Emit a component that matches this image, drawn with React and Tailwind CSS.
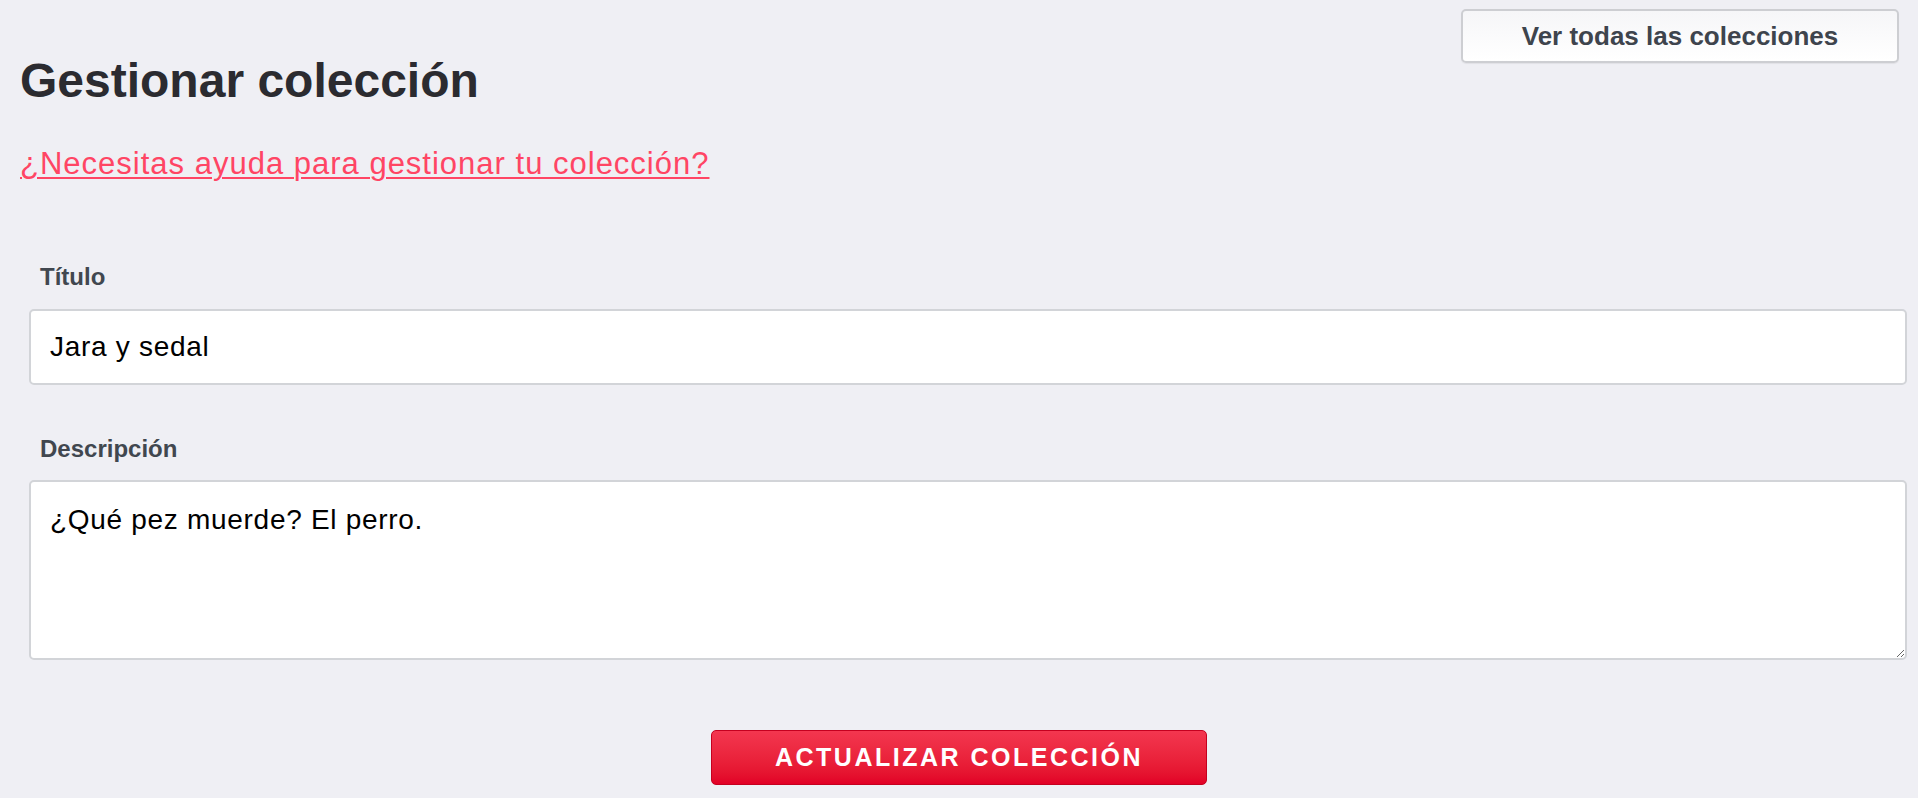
import React, { useState } from "react";

const font = { fontFamily: '"Liberation Sans", Arial, Helvetica, sans-serif' };

function Field({ label, children, className }) {
  return (
    <div className={className}>
      <label className="block pl-[11px] text-[24px] leading-[28px] font-bold text-[#41474f]">
        {label}
      </label>
      {children}
    </div>
  );
}

export default function App() {
  const [title, setTitle] = useState("Jara y sedal");
  const [desc, setDesc] = useState("¿Qué pez muerde? El perro.");

  return (
    <div className="min-h-screen w-full bg-[#efeff4]" style={font}>
      <div className="flex items-start justify-between pl-[20px] pr-[19px]">
        <h1 className="mt-[57px] text-[48px] leading-[48px] font-bold text-[#2b2b30]">
          Gestionar colección
        </h1>
        <button className="mt-[9px] h-[54px] w-[438px] rounded-[5px] border-2 border-[#cdced2] bg-linear-to-b from-[#f6f6f8] to-white text-[26px] font-bold text-[#3e444d] shadow-[0_1px_1px_rgba(0,0,0,0.06)]">
          Ver todas las colecciones
        </button>
      </div>

      <div className="pl-[20px] mt-[41px]">
        <a
          href="#"
          className="text-[31px] leading-[36px] tracking-[1px] text-[#ff4564] underline decoration-2 underline-offset-[3px]"
        >
          ¿Necesitas ayuda para gestionar tu colección?
        </a>
      </div>

      <form className="ml-[29px] mr-[11px] mt-[81px]" onSubmit={(e) => e.preventDefault()}>
        <Field label="Título">
          <input
            value={title}
            onChange={(e) => setTitle(e.target.value)}
            className="mt-[18px] block h-[76px] w-full rounded-[5px] border-2 border-[#d2d4d8] bg-white px-[19px] text-[28px] tracking-[0.7px] text-black outline-none"
          />
        </Field>

        <Field label="Descripción" className="mt-[50px]">
          <textarea
            value={desc}
            onChange={(e) => setDesc(e.target.value)}
            className="mt-[17px] block h-[180px] w-full rounded-[5px] border-2 border-[#d2d4d8] bg-white px-[19px] pt-[20px] text-[28px] leading-[36px] tracking-[0.7px] text-black outline-none"
          />
        </Field>
      </form>

      <div className="mt-[70px] flex justify-center">
        <button className="h-[55px] w-[496px] rounded-[5px] border border-[#c5001f] bg-linear-to-b from-[#f3364f] to-[#e20026] text-[25px] font-bold tracking-[2.5px] text-white">
          ACTUALIZAR COLECCIÓN
        </button>
      </div>
    </div>
  );
}
